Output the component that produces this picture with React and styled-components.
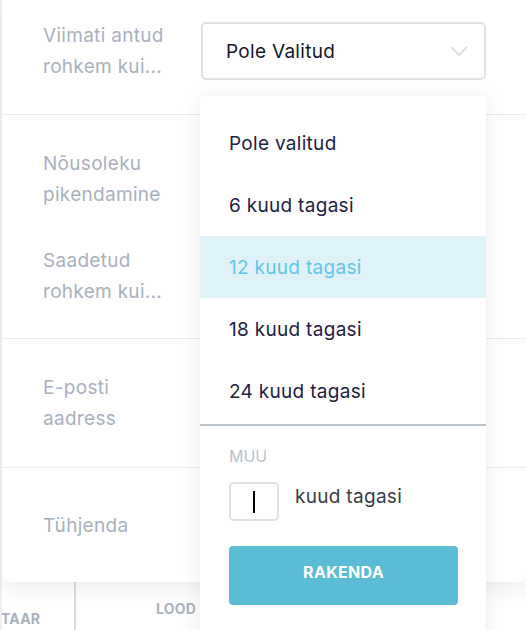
import { useState } from 'react'
import styled, { createGlobalStyle } from 'styled-components'

const GlobalStyle = createGlobalStyle`
  html, body {
    margin: 0;
    padding: 0;
    background: #ffffff;
    font-family: Inter, 'Noto Sans', sans-serif;
    -webkit-font-smoothing: antialiased;
  }
`

const StyledPage = styled.div`
  position: relative;
  width: 526px;
  height: 630px;
  overflow: hidden;
  background: #ffffff;
`

const StyledBackdrop = styled.div`
  display: flex;
  flex-direction: column;
  height: 100%;
  background: linear-gradient(90deg, #eef0f3 0, #eef0f3 2px, #ffffff 2px);
`

const StyledCard = styled.div`
  margin-left: 2px;
  flex: 0 0 582px;
  background: #ffffff;
  border-radius: 0 0 8px 8px;
  box-shadow: 0 10px 18px rgba(0, 0, 0, 0.06);
  display: flex;
  flex-direction: column;
  position: relative;
  z-index: 1;
`

const StyledRow = styled.div`
  display: flex;
  flex-direction: column;
  justify-content: ${({ align }) => align || 'center'};
  gap: ${({ gap }) => gap || 0}px;
  height: ${({ height }) => height}px;
  padding: ${({ pad }) => pad || '0'};
  box-sizing: border-box;
  border-bottom: ${({ last }) => (last ? 'none' : '1px solid #ebebeb')};
`

const StyledField = styled.div`
  display: flex;
  align-items: center;
  gap: 34px;
  padding-left: 41px;
`

const StyledLabel = styled.div`
  width: 124px;
  font-size: 19px;
  letter-spacing: 0.3px;
  line-height: 31px;
  color: #a9b1be;
`

const StyledSelect = styled.div`
  width: 285px;
  height: 58px;
  box-sizing: border-box;
  border: 2px solid #e1e1e1;
  border-radius: 5px;
  display: flex;
  align-items: center;
  justify-content: space-between;
  padding: 0 16px 0 23px;
  font-size: 19px;
  letter-spacing: 0.3px;
  color: #15172b;
`

const StyledFooter = styled.div`
  flex: 1;
  display: flex;
  font-size: 14px;
  font-weight: 700;
  letter-spacing: 0.2px;
  color: #aab3bf;
`

const StyledFooterCell = styled.div`
  box-sizing: border-box;
  width: ${({ width }) => width}px;
  display: flex;
  align-items: flex-end;
  padding-bottom: ${({ bottom }) => bottom}px;
  padding-left: ${({ left }) => left || 0}px;
  border-right: ${({ divider }) => (divider ? '2px solid #d7dce3' : 'none')};
`

const StyledMenu = styled.div`
  position: absolute;
  left: 200px;
  top: 96px;
  width: 286px;
  height: 560px;
  background: #ffffff;
  border-radius: 5px;
  box-shadow: 0 2px 22px rgba(0, 0, 0, 0.08);
  padding-top: 16px;
  box-sizing: border-box;
  z-index: 2;
`

const StyledOption = styled.div`
  height: 62px;
  display: flex;
  align-items: center;
  padding-left: 29px;
  font-size: 19px;
  letter-spacing: 0.3px;
  color: ${({ active }) => (active ? '#5fc6e6' : '#1e2145')};
  background: ${({ active }) => (active ? '#dff2f8' : 'transparent')};
`

const StyledMenuDivider = styled.div`
  height: 2px;
  background: #bcc5ce;
  margin-top: 2px;
`

const StyledCustom = styled.div`
  padding: 20px 28px 0 29px;
  display: flex;
  flex-direction: column;
`

const StyledCaption = styled.div`
  font-size: 16px;
  color: #b9c2cc;
  text-transform: uppercase;
  height: 20px;
  line-height: 20px;
`

const StyledInputRow = styled.div`
  display: flex;
  align-items: center;
  gap: 16px;
  margin-top: 16px;
`

const StyledInput = styled.div`
  width: 50px;
  height: 39px;
  box-sizing: border-box;
  border: 2px solid #e1e1e1;
  border-radius: 5px;
  display: flex;
  align-items: center;
  justify-content: center;
`

const StyledCaret = styled.span`
  width: 2px;
  height: 22px;
  background: #000000;
`

const StyledUnit = styled.span`
  font-size: 19px;
  letter-spacing: 0.3px;
  color: #383c47;
  margin-bottom: 10px;
`

const StyledButton = styled.button`
  margin-top: 25px;
  width: 229px;
  height: 59px;
  border: none;
  border-radius: 4px;
  background: #5bbcd6;
  color: #ffffff;
  font-family: inherit;
  font-size: 16px;
  font-weight: 700;
  letter-spacing: 0.3px;
  text-align: center;
  padding-bottom: 8px;
`

const Chevron = () => (
  <svg width="18" height="10" viewBox="0 0 18 10" fill="none">
    <path d="M1 1l8 8 8-8" stroke="#d3d6da" strokeWidth="1.5" />
  </svg>
)

const options = ['Pole valitud', '6 kuud tagasi', '12 kuud tagasi', '18 kuud tagasi', '24 kuud tagasi']

const App = () => {
  const [selected, setSelected] = useState(2)

  return (
    <StyledPage>
      <GlobalStyle />
      <StyledBackdrop>
        <StyledCard>
          <StyledRow height={115} pad="0 0 12px">
            <StyledField>
              <StyledLabel>Viimati antud rohkem kui...</StyledLabel>
              <StyledSelect>
                <span>Pole Valitud</span>
                <Chevron />
              </StyledSelect>
            </StyledField>
          </StyledRow>
          <StyledRow height={224} align="flex-start" gap={35} pad="33px 0 0">
            <StyledField>
              <StyledLabel>Nõusoleku pikendamine</StyledLabel>
            </StyledField>
            <StyledField>
              <StyledLabel>Saadetud rohkem kui...</StyledLabel>
            </StyledField>
          </StyledRow>
          <StyledRow height={129}>
            <StyledField>
              <StyledLabel>E-posti aadress</StyledLabel>
            </StyledField>
          </StyledRow>
          <StyledRow height={114} last>
            <StyledField>
              <StyledLabel>Tühjenda</StyledLabel>
            </StyledField>
          </StyledRow>
        </StyledCard>
        <StyledFooter>
          <StyledFooterCell width={76} bottom={3} left={1} divider>
            TAAR
          </StyledFooterCell>
          <StyledFooterCell width={125} bottom={13} left={80}>
            LOOD
          </StyledFooterCell>
        </StyledFooter>
      </StyledBackdrop>
      <StyledMenu>
        {options.map((option, i) => (
          <StyledOption key={option} active={i === selected} onClick={() => setSelected(i)}>
            {option}
          </StyledOption>
        ))}
        <StyledMenuDivider />
        <StyledCustom>
          <StyledCaption>Muu</StyledCaption>
          <StyledInputRow>
            <StyledInput>
              <StyledCaret />
            </StyledInput>
            <StyledUnit>kuud tagasi</StyledUnit>
          </StyledInputRow>
          <StyledButton>RAKENDA</StyledButton>
        </StyledCustom>
      </StyledMenu>
    </StyledPage>
  )
}

export default App
